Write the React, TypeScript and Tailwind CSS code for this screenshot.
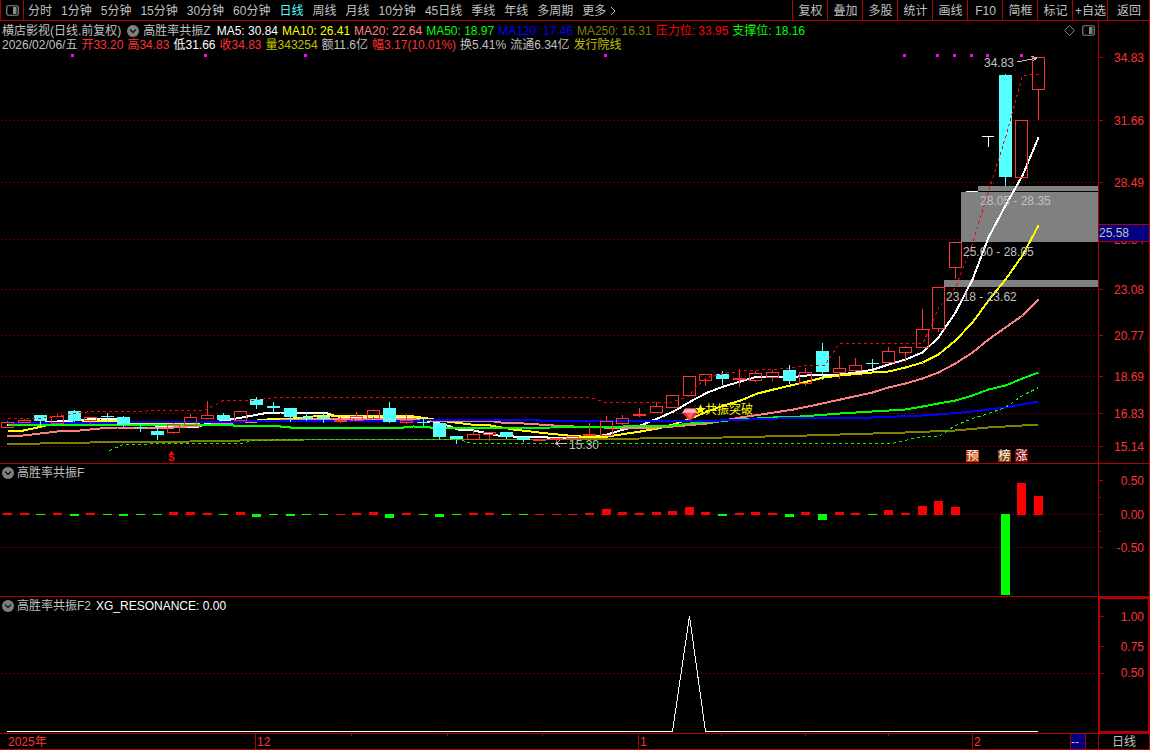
import type { ReactNode } from 'react';

type Point = [number, number];

const PERIODS = ['分时', '1分钟', '5分钟', '15分钟', '30分钟', '60分钟', '日线', '周线', '月线', '10分钟', '45日线', '季线', '年线', '多周期'];
const ACTIONS = ['复权', '叠加', '多股', '统计', '画线', 'F10', '简框', '标记', '+自选'];

const slot = (i: number) => Math.floor(7.5 + i * 16.63) + 0.5;

// kind, body top, body bottom, high, low
type Candle = ['u' | 'd', number, number, number, number];
const CANDLES: Candle[] = [
  ['u', 422, 427, 421, 427], ['u', 420, 422, 419, 423], ['d', 415, 421, 415, 425], ['u', 416, 423, 414, 423],
  ['d', 411, 421, 410, 421], ['u', 417, 420, 417, 425], ['d', 416, 417, 413, 421], ['d', 417, 425, 416, 426],
  ['d', 427, 428, 423, 431], ['d', 431, 435, 425, 439], ['u', 424, 432, 423, 434], ['u', 417, 425, 414, 425],
  ['u', 415, 418, 401, 418], ['d', 415, 420, 413, 420], ['u', 411, 420, 411, 420], ['d', 399, 405, 397, 408],
  ['d', 406, 408, 402, 412], ['d', 408, 417, 408, 421], ['d', 417, 419, 412, 420], ['d', 417, 419, 413, 422],
  ['u', 420, 421, 417, 423], ['u', 416, 420, 412, 420], ['u', 410, 418, 409, 418], ['d', 408, 422, 402, 422],
  ['u', 420, 422, 414, 424], ['d', 422, 423, 419, 425], ['d', 423, 437, 423, 438], ['d', 436, 439, 436, 443],
  ['u', 434, 439, 430, 439], ['u', 432, 434, 432, 441], ['d', 432, 437, 432, 438], ['d', 437, 440, 437, 441],
  ['u', 439, 440, 439, 440], ['u', 438, 439, 438, 442], ['u', 436, 438, 436, 438], ['u', 434, 435, 423, 435],
  ['u', 421, 435, 416, 435], ['u', 418, 423, 415, 425], ['u', 414, 415, 408, 417], ['u', 406, 412, 402, 413],
  ['u', 395, 407, 395, 407], ['u', 376, 395, 376, 395], ['u', 374, 380, 374, 386], ['d', 374, 379, 371, 384],
  ['u', 378, 379, 369, 387], ['u', 373, 380, 371, 382], ['u', 372, 377, 370, 381], ['d', 370, 381, 365, 383],
  ['u', 372, 383, 368, 386], ['d', 351, 372, 343, 379], ['u', 368, 372, 356, 379], ['u', 365, 370, 358, 372],
  ['d', 363, 364, 359, 368], ['u', 351, 362, 347, 364], ['u', 347, 352, 346, 362], ['u', 329, 347, 309, 347],
  ['u', 287, 328, 287, 332], ['u', 242, 267, 242, 279],
];
const LATE_CANDLES: { i: number; c: Candle }[] = [
  { i: 60, c: ['d', 75, 177, 74, 185] },
  { i: 61, c: ['u', 120, 177, 120, 177] },
  { i: 62, c: ['u', 57, 89, 57, 120] },
];
const ALL_CANDLES = [...CANDLES.map((c, i) => ({ i, c })), ...LATE_CANDLES];

const MA5: Point[] = [[7, 425], [20, 424], [57, 421], [73, 420], [100, 418], [117, 418], [133, 422], [147, 424], [163, 426], [198, 426], [207, 423], [230, 419], [247, 416], [263, 413], [280, 412], [307, 412], [327, 413], [337, 416], [357, 417], [373, 416], [403, 417], [413, 418], [433, 421], [450, 426], [457, 429], [473, 430], [483, 432], [497, 435], [513, 436], [537, 436], [547, 437], [590, 437], [607, 434], [623, 429], [640, 425], [657, 418], [673, 411], [690, 401], [707, 392], [723, 386], [740, 381], [757, 376], [773, 376], [788, 377], [807, 375], [840, 374], [856, 372], [873, 369], [888, 364], [905, 359], [922, 352], [938, 337], [955, 312], [972, 279], [988, 237], [1005, 205], [1022, 175], [1038, 137]];
const MA10: Point[] = [[7, 430], [23, 430], [37, 427], [50, 424], [73, 423], [90, 421], [117, 420], [133, 423], [173, 422], [200, 422], [247, 421], [267, 419], [293, 418], [313, 416], [330, 415], [403, 415], [413, 416], [427, 418], [447, 421], [470, 424], [490, 425], [513, 429], [530, 431], [547, 433], [567, 435], [580, 436], [607, 436], [640, 431], [657, 428], [673, 424], [690, 418], [707, 411], [723, 405], [740, 400], [757, 393], [773, 389], [790, 385], [807, 381], [823, 377], [840, 375], [872, 372], [888, 371], [905, 367], [922, 362], [938, 354], [955, 340], [972, 322], [988, 300], [1005, 279], [1022, 255], [1038, 225]];
const MA20: Point[] = [[7, 436], [23, 435], [40, 433], [57, 431], [80, 430], [100, 428], [117, 427], [173, 427], [200, 425], [233, 422], [257, 421], [280, 420], [313, 419], [353, 418], [403, 418], [430, 420], [487, 420], [500, 422], [523, 423], [553, 425], [573, 426], [603, 427], [640, 428], [673, 426], [707, 423], [740, 417], [767, 413], [793, 409], [817, 404], [840, 399], [872, 392], [888, 387], [905, 383], [922, 378], [938, 372], [955, 363], [972, 352], [988, 339], [1005, 327], [1022, 315], [1038, 299]];
const MA50: Point[] = [[7, 424], [200, 424], [233, 425], [270, 425], [290, 427], [403, 427], [413, 426], [430, 427], [550, 427], [623, 426], [673, 425], [690, 423], [740, 419], [773, 417], [800, 416], [840, 413], [872, 411], [905, 409], [922, 406], [938, 403], [955, 400], [972, 395], [988, 389], [1005, 385], [1022, 378], [1038, 372]];
const MA120: Point[] = [[7, 423], [117, 422], [247, 421], [420, 420], [430, 419], [507, 419], [540, 420], [720, 420], [807, 417], [872, 417], [922, 415], [938, 414], [972, 411], [1005, 407], [1038, 401]];
const MA250: Point[] = [[7, 444], [40, 443], [90, 442], [190, 441], [240, 440], [305, 439], [570, 439], [640, 438], [723, 437], [807, 435], [840, 434], [905, 432], [955, 430], [988, 427], [1038, 424]];
const UPPER: Point[] = [[7, 418], [40, 418], [67, 414], [90, 411], [203, 410], [212, 406], [223, 400], [253, 400], [267, 398], [280, 397], [590, 397], [605, 402], [670, 402], [688, 396], [697, 385], [707, 377], [723, 373], [747, 370], [788, 368], [803, 365], [824, 365], [839, 343], [922, 343], [930, 327], [938, 307], [947, 298], [955, 287], [972, 243], [988, 191], [1005, 137], [1022, 75], [1038, 74]];
const LOWER: Point[] = [[109, 450], [123, 444], [147, 444], [153, 443], [240, 443], [253, 440], [290, 439], [458, 439], [472, 443], [891, 443], [922, 436], [938, 436], [955, 425], [972, 418], [988, 413], [1005, 407], [1022, 395], [1038, 387]];

const BARS = [2, 2, -1, 2, -2, 2, -1, -2, -1, -1, 3, 3, 2, -1, 3, -3, -1, -2, -1, -1, 1, 2, 3, -4, 2, -1, -3, -1, 2, 2, -1, -1, 1, 1, 1, 2, 6, 3, 2, 3, 4, 8, 3, -2, 2, 3, 2, -3, 3, -6, 3, 2, -1, 5, 2, 9, 14, 8, 0, 0, -81, 32, 19];
const DOTS = [72, 205, 305, 605, 904, 937, 954, 971, 987, 1021];
const GRID = [120, 182, 239, 289, 335, 376, 413, 446];

const MAIN_AXIS: [string, number][] = [['34.83', 57], ['31.66', 120], ['28.49', 182], ['25.84', 239], ['23.08', 289], ['20.77', 335], ['18.69', 376], ['16.83', 413], ['15.14', 446]];

const toPoints = (p: Point[]) => p.map(([x, y]) => `${x + 0.5},${y + 0.5}`).join(' ');

function Line({ points, color, width = 2, dashed = false }: { points: Point[]; color: string; width?: number; dashed?: boolean }) {
  return <polyline points={toPoints(points)} fill="none" stroke={color} strokeWidth={width} strokeDasharray={dashed ? '3 3' : undefined} />;
}

function GridLine({ y }: { y: number }) {
  return <line x1="1" x2="1095" y1={y + 0.5} y2={y + 0.5} stroke="#b00000" strokeDasharray="1 3" />;
}

function PanelIcon({ dim = false }: { dim?: boolean }) {
  return (
    <svg width="13" height="11" viewBox="0 0 13 11" className={dim ? 'text-[#808080]' : 'text-[#8c8c8c]'} aria-hidden="true">
      <rect x="0.75" y="0.75" width="11.5" height="9.5" rx="1.5" fill="none" stroke="currentColor" strokeWidth="1.2" />
      <rect x="7" y="2" width="3.5" height="7" fill="currentColor" />
    </svg>
  );
}

function Collapse({ label }: { label: string }) {
  return (
    <button type="button" aria-label={label} className="size-3 shrink-0">
      <svg viewBox="0 0 12 12" className="size-3">
        <circle cx="6" cy="6" r="6" fill="#808080" />
        <path d="M3 4.5 6 7.5 9 4.5" fill="none" stroke="#111" strokeWidth="1.3" />
      </svg>
    </button>
  );
}

function Plot({ top, height, children, labels }: { top: number; height: number; children: ReactNode; labels?: ReactNode }) {
  return (
    <div className="relative min-h-0 flex-1 overflow-hidden">
      <svg viewBox={`0 ${top} 1098 ${height}`} preserveAspectRatio="none" shapeRendering="crispEdges" className="absolute inset-0 size-full">
        {children}
      </svg>
      {labels}
    </div>
  );
}

function Note({ x, y, className = 'text-[#c0c0c0]', children }: { x: number; y: number; className?: string; children: ReactNode }) {
  return (
    <span className={`absolute -translate-y-1/2 leading-3 whitespace-nowrap ${className}`} style={{ left: `${(x / 1098) * 100}%`, top: `${((y - 51) / 412) * 100}%` }}>
      {children}
    </span>
  );
}

function Axis({ top, height, values, minor = [], framed = false, children }: { top: number; height: number; values: [string, number][]; minor?: number[]; framed?: boolean; children?: ReactNode }) {
  const pos = (y: number) => ({ top: `${((y - top) / height) * 100}%` });
  return (
    <div className={`relative w-[52px] shrink-0 border-[#b00000] text-[#ff3232] ${framed ? 'border-2' : 'border-x'}`}>
      {values.map(([text, y]) => (
        <div key={text} className="absolute inset-x-0 flex h-px items-center justify-between" style={pos(y)}>
          <span className="h-px w-1 bg-[#b00000]" />
          <span className={`leading-3 ${framed ? 'pr-1' : 'pr-[5px]'}`}>{text}</span>
        </div>
      ))}
      {minor.map((y) => (
        <span key={y} className="absolute left-0 h-px w-0.5 bg-[#b00000]" style={pos(y)} />
      ))}
      {children}
    </div>
  );
}

function CandleShape({ i, c: [kind, top, bottom, high, low] }: { i: number; c: Candle }) {
  const x = slot(i);
  if (kind === 'd') {
    return (
      <g fill="#54ffff">
        <rect x={x - 6.5} y={top} width="13" height={bottom - top} />
        <rect x={x - 0.5} y={high} width="1" height={low - high + 1} />
      </g>
    );
  }
  return (
    <g stroke="#ff3232" fill="none">
      <rect x={x - 6} y={top + 0.5} width="12" height={bottom - top} />
      {high < top && <line x1={x} x2={x} y1={high} y2={top} />}
      {low > bottom && <line x1={x} x2={x} y1={bottom} y2={low} />}
    </g>
  );
}

export default function App() {
  return (
    <div className="grid h-screen w-full grid-rows-[21px_minmax(0,443fr)_minmax(0,133fr)_minmax(0,136fr)_17px] overflow-hidden bg-black font-['Liberation_Sans','Noto_Sans_CJK_SC',sans-serif] text-[12px] leading-[14px] text-[#c0c0c0]">
      <nav className="flex border-b border-l border-[#b00000]">
        <button type="button" aria-label="侧栏" className="flex w-[23px] items-center justify-center border-r border-[#b00000]">
          <PanelIcon />
        </button>
        <div className="flex flex-1 items-center gap-[9px] pt-0.5 pl-1 whitespace-nowrap">
          {PERIODS.map((p) => (
            <button key={p} type="button" className={p === '日线' ? 'text-[#54ffff]' : ''}>{p}</button>
          ))}
          <button type="button" className="flex items-center gap-1">
            更多
            <svg width="6" height="10" viewBox="0 0 6 10" aria-hidden="true"><path d="M1 1 5 5 1 9" fill="none" stroke="currentColor" /></svg>
          </button>
        </div>
        <div className="flex border-r border-[#b00000] whitespace-nowrap">
          {ACTIONS.map((a) => (
            <button key={a} type="button" className="w-[35px] border-l border-[#b00000] pt-0.5 pl-px">{a}</button>
          ))}
          <button type="button" className="w-[42px] border-l border-[#b00000] pt-0.5 pl-px">返回</button>
        </div>
      </nav>

      <section className="flex min-h-0 border-b border-[#b00000]">
        <div className="flex min-w-0 flex-1 flex-col">
          <header className="flex h-[30px] shrink-0 justify-between pt-[3px] pl-0.5 whitespace-nowrap">
            <div>
              <div className="flex h-[14px] items-center gap-1">
                <h1>横店影视(日线.前复权)</h1>
                <span className="flex items-center gap-1 px-0.5">
                  <Collapse label="主图指标" />
                  高胜率共振Z
                </span>
                <span className="text-white">MA5: 30.84</span>
                <span className="text-[#ffff00]">MA10: 26.41</span>
                <span className="text-[#ff8080]">MA20: 22.64</span>
                <span className="text-[#00ff00]">MA50: 18.97</span>
                <span className="text-[#0000ff]">MA120: 17.46</span>
                <span className="text-[#808000]">MA250: 16.31</span>
                <span className="text-[#ff0000]">压力位: 33.95</span>
                <span className="text-[#00ff00]">支撑位: 18.16</span>
              </div>
              <div className="flex h-[14px] items-center gap-1">
                <span>2026/02/06/五</span>
                <span className="text-[#ff3232]">开33.20</span>
                <span className="text-[#ff3232]">高34.83</span>
                <span className="text-white">低31.66</span>
                <span className="text-[#ff3232]">收34.83</span>
                <span className="text-[#c0c000]">量343254</span>
                <span>额11.6亿</span>
                <span className="text-[#ff3232]">幅3.17(10.01%)</span>
                <span>换5.41%</span>
                <span>流通6.34亿</span>
                <span className="text-[#c0c000]">发行院线</span>
              </div>
            </div>
            <div className="flex h-3 items-center gap-[7px] pr-[3px]">
              <button type="button" aria-label="标记点">
                <svg width="11" height="11" viewBox="0 0 11 11"><path d="M5.5.5 10.5 5.5 5.5 10.5.5 5.5Z" fill="none" stroke="#808080" /></svg>
              </button>
              <button type="button" aria-label="切换侧栏"><PanelIcon dim /></button>
            </div>
          </header>
          <Plot
            top={51}
            height={412}
            labels={
              <>
                <Note x={984} y={63}>34.83</Note>
                <Note x={980} y={201}>28.05 - 28.35</Note>
                <Note x={963} y={252}>25.60 - 28.05</Note>
                <Note x={946} y={297}>23.18 - 23.62</Note>
                <Note x={569} y={445}>15.30</Note>
                <Note x={705} y={410} className="text-[#ffff00]">共振突破</Note>
                <Note x={168} y={458} className="text-[10px] font-bold text-[#ff0000]">S</Note>
                <Note x={966} y={456} className="w-[13px] bg-[#c04000] text-center text-white">预</Note>
                <Note x={998} y={456} className="w-[13px] bg-[#804000] text-center text-white">榜</Note>
                <Note x={1015} y={456} className="w-[13px] bg-[#800000] text-center text-white">涨</Note>
              </>
            }
          >
            {GRID.map((y) => <GridLine key={y} y={y} />)}
            <g fill="#808080">
              <rect x="978" y="186" width="120" height="5" />
              <rect x="961" y="192" width="137" height="50" />
              <rect x="944" y="280" width="154" height="7" />
            </g>
            <Line points={MA5} color="#fff" />
            <Line points={MA10} color="#ff0" />
            <Line points={MA20} color="#ff8080" />
            <Line points={MA50} color="#0f0" />
            <Line points={MA120} color="#00f" />
            <Line points={MA250} color="#808000" />
            {ALL_CANDLES.map(({ i, c }) => <CandleShape key={i} i={i} c={c} />)}
            <Line points={UPPER} color="#f00" width={1} dashed />
            <Line points={LOWER} color="#0f0" width={1} dashed />
            <path d="M966 191.5H978M982 136.5H994M988.5 136V147" stroke="#fff" fill="none" />
            {DOTS.map((x) => <rect key={x} x={x - 1} y="54" width="3" height="3" fill="#f0f" />)}
            <path d="M1017 62 1037 58M1031 56 1037 58 1033 61" stroke="#c0c0c0" fill="none" />
            <path d="M567 443.5H556M560 440 556 443.5 560 447" stroke="#c0c0c0" fill="none" />
            <path d="M169 454.5 171.5 451 174 454.5Z" fill="#f00" />
            <g shapeRendering="geometricPrecision">
              <path d="M685 408.500H695L698 413 690 421 682 413Z" fill="#e8202c" />
              <path d="M685 408.500H695L698 413H682Z" fill="#ff9aa0" />
              <path d="M686 413H694L690 420Z" fill="#ff5964" />
              <path d="M685 411H695" stroke="#ffe0e2" />
              <path d="M700.5 404 702 408H706L703 410.500 704 414.500 700.500 412 697 414.500 698 410.500 695 408H699Z" fill="#ff0" />
            </g>
          </Plot>
        </div>
        <Axis top={21} height={442} values={MAIN_AXIS}>
          <span className="absolute inset-x-0 h-[18px] border-y border-[#b00000] bg-[#000080] leading-4 text-[#c0c0c0]" style={{ top: `${((224 - 21) / 442) * 100}%` }}>
            25.58
          </span>
        </Axis>
      </section>

      <section className="flex min-h-0 border-b border-[#b00000]">
        <div className="flex min-w-0 flex-1 flex-col">
          <header className="flex h-4 shrink-0 items-center gap-[3px] pt-0.5 pl-0.5">
            <Collapse label="副图指标一" />
            <h2>高胜率共振F</h2>
          </header>
          <Plot top={480} height={116}>
            <GridLine y={514} />
            <GridLine y={547} />
            {BARS.map((v, i) => (
              <rect key={i} x={slot(i) - 4.5} y={v > 0 ? 515 - v : 514} width="9" height={Math.abs(v)} fill={v > 0 ? '#f00' : '#0f0'} />
            ))}
          </Plot>
        </div>
        <Axis top={464} height={132} values={[['0.50', 480], ['0.00', 514], ['-0.50', 547]]} minor={[497, 531]} />
      </section>

      <section className="flex min-h-0">
        <div className="flex min-w-0 flex-1 flex-col">
          <header className="flex h-4 shrink-0 items-center gap-[3px] pt-0.5 pl-0.5">
            <Collapse label="副图指标二" />
            <h2>高胜率共振F2</h2>
            <span className="pl-0.5 text-white">XG_RESONANCE: 0.00</span>
          </header>
          <Plot top={613} height={120}>
            <GridLine y={673} />
            <polyline points="7,731.5 672.5,731.5 689.5,616 705.5,731.5 1038,731.5" fill="none" stroke="#fff" />
          </Plot>
        </div>
        <Axis top={599} height={132} values={[['1.00', 616], ['0.75', 646], ['0.50', 673]]} framed />
      </section>

      <footer className="flex border-y border-[#b00000] leading-4 text-[#ff3232]">
        <div className="relative flex-1">
          <span className="absolute left-2">2025年</span>
          {[['12', 255], ['1', 638], ['2', 972]].map(([text, x]) => (
            <span key={text} className="absolute h-full border-l border-[#b00000] pl-px" style={{ left: `${(Number(x) / 1098) * 100}%` }}>{text}</span>
          ))}
          {[351, 447, 542, 721, 805, 888].map((x) => (
            <span key={x} className="absolute top-0 h-0.5 w-px bg-[#b00000]" style={{ left: `${(x / 1098) * 100}%` }} />
          ))}
          <span className="absolute h-full w-4 border-x border-[#b00000] bg-[#000080] text-[#c0c0c0]" style={{ left: `${(1070 / 1098) * 100}%` }}>--</span>
        </div>
        <div className="w-[52px] border-x border-[#b00000] text-center text-[#c0c0c0]">日线</div>
      </footer>
    </div>
  );
}
